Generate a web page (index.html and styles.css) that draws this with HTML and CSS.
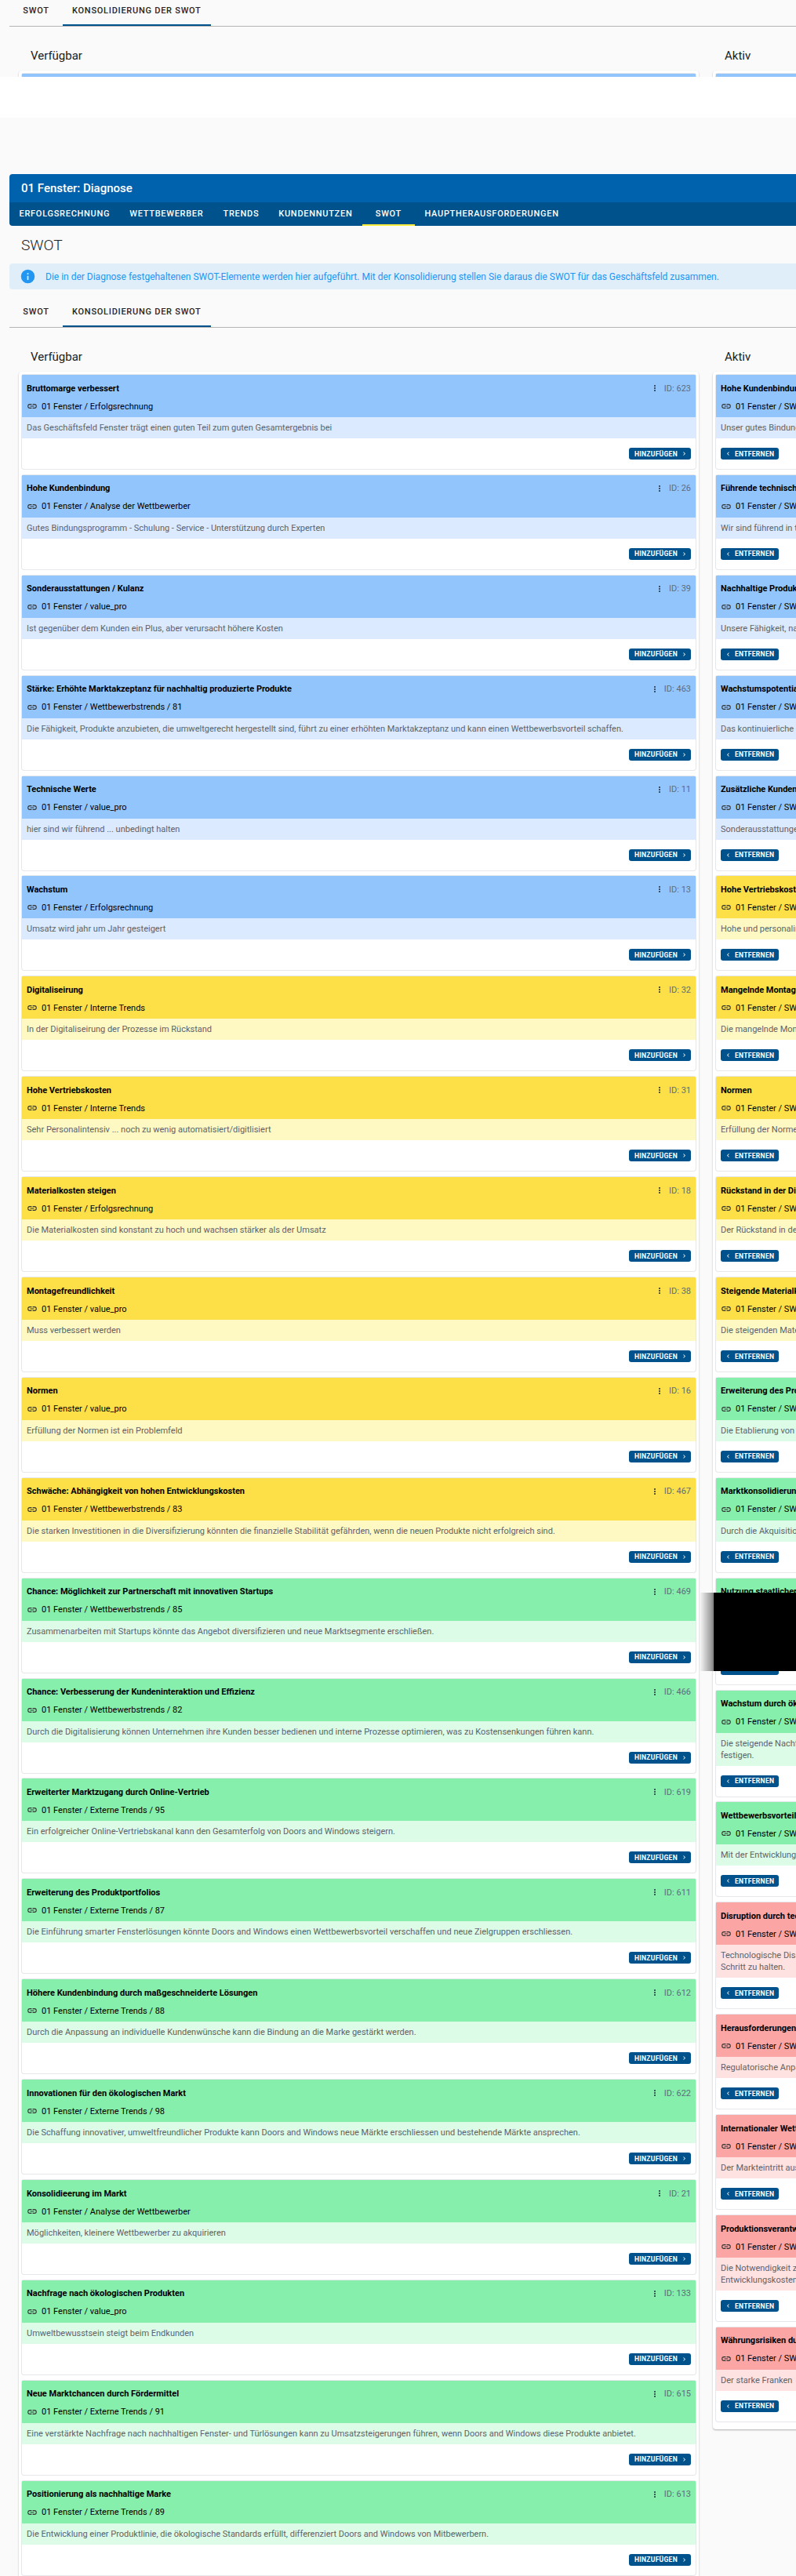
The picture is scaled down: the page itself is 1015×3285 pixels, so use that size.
FILE: index.html
```html
<!DOCTYPE html>
<html lang="de">
<head>
<meta charset="utf-8">
<title>01 Fenster: Diagnose</title>
<link rel="stylesheet" href="styles.css">
</head>
<body>
<svg class="defs" aria-hidden="true">
  <symbol id="i-link" viewBox="0 0 24 24"><path d="M3.9,12C3.9,10.29 5.29,8.9 7,8.9H11V7H7A5,5 0 0,0 2,12A5,5 0 0,0 7,17H11V15.1H7C5.29,15.1 3.9,13.71 3.9,12M8,13H16V11H8V13M17,7H13V8.9H17C18.71,8.9 20.1,10.29 20.1,12C20.1,13.71 18.71,15.1 17,15.1H13V17H17A5,5 0 0,0 22,12A5,5 0 0,0 17,7Z"/></symbol>
  <symbol id="i-dots" viewBox="0 0 24 24"><path d="M12,16A2,2 0 0,1 14,18A2,2 0 0,1 12,20A2,2 0 0,1 10,18A2,2 0 0,1 12,16M12,10A2,2 0 0,1 14,12A2,2 0 0,1 12,14A2,2 0 0,1 10,12A2,2 0 0,1 12,10M12,4A2,2 0 0,1 14,6A2,2 0 0,1 12,8A2,2 0 0,1 10,6A2,2 0 0,1 12,4Z"/></symbol>
  <symbol id="i-right" viewBox="0 0 24 24"><path d="M8.59,16.58L13.17,12L8.59,7.41L10,6L16,12L10,18L8.59,16.58Z"/></symbol>
  <symbol id="i-left" viewBox="0 0 24 24"><path d="M15.41,16.58L10.83,12L15.41,7.41L14,6L8,12L14,18L15.41,16.58Z"/></symbol>
  <symbol id="i-info" viewBox="0 0 24 24"><path d="M13,9H11V7H13M13,17H11V11H13M12,2A10,10 0 0,0 2,12A10,10 0 0,0 12,22A10,10 0 0,0 22,12A10,10 0 0,0 12,2Z"/></symbol>
</svg>
<div class="page">

  <section class="stub">
    <nav class="tabs">
      <a class="tab">SWOT</a>
      <a class="tab tab-active">KONSOLIDIERUNG DER SWOT</a>
    </nav>
    <div class="columns">
      <div class="column"><h3 class="col-title">Verfügbar</h3><div class="panel"><div class="card"><div class="card-head blue"></div></div></div></div>
      <div class="column"><h3 class="col-title">Aktiv</h3><div class="panel"><div class="card"><div class="card-head blue"></div></div></div></div>
    </div>
  </section>

  <div class="blank"></div>

  <main class="main">
    <header class="app-title">01 Fenster: Diagnose</header>
    <nav class="main-nav">
      <a class="nav-item">ERFOLGSRECHNUNG</a>
      <a class="nav-item">WETTBEWERBER</a>
      <a class="nav-item">TRENDS</a>
      <a class="nav-item">KUNDENNUTZEN</a>
      <a class="nav-item nav-active">SWOT</a>
      <a class="nav-item">HAUPTHERAUSFORDERUNGEN</a>
    </nav>
    <h2 class="page-title">SWOT</h2>
    <div class="alert">
      <svg class="alert-icon"><use href="#i-info"/></svg>
      <span>Die in der Diagnose festgehaltenen SWOT-Elemente werden hier aufgeführt. Mit der Konsolidierung stellen Sie daraus die SWOT für das Geschäftsfeld zusammen.</span>
    </div>
    <nav class="tabs tabs-main">
      <a class="tab">SWOT</a>
      <a class="tab tab-active">KONSOLIDIERUNG DER SWOT</a>
    </nav>

    <div class="columns">
      <div class="column">
        <h3 class="col-title">Verfügbar</h3>
        <div class="panel">

          <article class="card"><div class="card-head blue"><div class="head-row"><strong>Bruttomarge verbessert</strong><span class="meta"><svg class="dots"><use href="#i-dots"/></svg>ID: 623</span></div><div class="source"><svg class="link"><use href="#i-link"/></svg>01 Fenster / Erfolgsrechnung</div></div><p class="desc blue-l">Das Geschäftsfeld Fenster trägt einen guten Teil zum guten Gesamtergebnis bei</p><div class="actions end"><button class="btn btn-add">HINZUFÜGEN<svg class="chev"><use href="#i-right"/></svg></button></div></article>

          <article class="card"><div class="card-head blue"><div class="head-row"><strong>Hohe Kundenbindung</strong><span class="meta"><svg class="dots"><use href="#i-dots"/></svg>ID: 26</span></div><div class="source"><svg class="link"><use href="#i-link"/></svg>01 Fenster / Analyse der Wettbewerber</div></div><p class="desc blue-l">Gutes Bindungsprogramm - Schulung - Service - Unterstützung durch Experten</p><div class="actions end"><button class="btn btn-add">HINZUFÜGEN<svg class="chev"><use href="#i-right"/></svg></button></div></article>

          <article class="card"><div class="card-head blue"><div class="head-row"><strong>Sonderausstattungen / Kulanz</strong><span class="meta"><svg class="dots"><use href="#i-dots"/></svg>ID: 39</span></div><div class="source"><svg class="link"><use href="#i-link"/></svg>01 Fenster / value_pro</div></div><p class="desc blue-l">Ist gegenüber dem Kunden ein Plus, aber verursacht höhere Kosten</p><div class="actions end"><button class="btn btn-add">HINZUFÜGEN<svg class="chev"><use href="#i-right"/></svg></button></div></article>

          <article class="card"><div class="card-head blue"><div class="head-row"><strong>Stärke: Erhöhte Marktakzeptanz für nachhaltig produzierte Produkte</strong><span class="meta"><svg class="dots"><use href="#i-dots"/></svg>ID: 463</span></div><div class="source"><svg class="link"><use href="#i-link"/></svg>01 Fenster / Wettbewerbstrends / 81</div></div><p class="desc blue-l">Die Fähigkeit, Produkte anzubieten, die umweltgerecht hergestellt sind, führt zu einer erhöhten Marktakzeptanz und kann einen Wettbewerbsvorteil schaffen.</p><div class="actions end"><button class="btn btn-add">HINZUFÜGEN<svg class="chev"><use href="#i-right"/></svg></button></div></article>

          <article class="card"><div class="card-head blue"><div class="head-row"><strong>Technische Werte</strong><span class="meta"><svg class="dots"><use href="#i-dots"/></svg>ID: 11</span></div><div class="source"><svg class="link"><use href="#i-link"/></svg>01 Fenster / value_pro</div></div><p class="desc blue-l">hier sind wir führend ... unbedingt halten</p><div class="actions end"><button class="btn btn-add">HINZUFÜGEN<svg class="chev"><use href="#i-right"/></svg></button></div></article>

          <article class="card"><div class="card-head blue"><div class="head-row"><strong>Wachstum</strong><span class="meta"><svg class="dots"><use href="#i-dots"/></svg>ID: 13</span></div><div class="source"><svg class="link"><use href="#i-link"/></svg>01 Fenster / Erfolgsrechnung</div></div><p class="desc blue-l">Umsatz wird jahr um Jahr gesteigert</p><div class="actions end"><button class="btn btn-add">HINZUFÜGEN<svg class="chev"><use href="#i-right"/></svg></button></div></article>

          <article class="card"><div class="card-head yellow"><div class="head-row"><strong>Digitaliseirung</strong><span class="meta"><svg class="dots"><use href="#i-dots"/></svg>ID: 32</span></div><div class="source"><svg class="link"><use href="#i-link"/></svg>01 Fenster / Interne Trends</div></div><p class="desc yellow-l">In der Digitaliseirung der Prozesse im Rückstand</p><div class="actions end"><button class="btn btn-add">HINZUFÜGEN<svg class="chev"><use href="#i-right"/></svg></button></div></article>

          <article class="card"><div class="card-head yellow"><div class="head-row"><strong>Hohe Vertriebskosten</strong><span class="meta"><svg class="dots"><use href="#i-dots"/></svg>ID: 31</span></div><div class="source"><svg class="link"><use href="#i-link"/></svg>01 Fenster / Interne Trends</div></div><p class="desc yellow-l">Sehr Personalintensiv ... noch zu wenig automatisiert/digitlisiert</p><div class="actions end"><button class="btn btn-add">HINZUFÜGEN<svg class="chev"><use href="#i-right"/></svg></button></div></article>

          <article class="card"><div class="card-head yellow"><div class="head-row"><strong>Materialkosten steigen</strong><span class="meta"><svg class="dots"><use href="#i-dots"/></svg>ID: 18</span></div><div class="source"><svg class="link"><use href="#i-link"/></svg>01 Fenster / Erfolgsrechnung</div></div><p class="desc yellow-l">Die Materialkosten sind konstant zu hoch und wachsen stärker als der Umsatz</p><div class="actions end"><button class="btn btn-add">HINZUFÜGEN<svg class="chev"><use href="#i-right"/></svg></button></div></article>

          <article class="card"><div class="card-head yellow"><div class="head-row"><strong>Montagefreundlichkeit</strong><span class="meta"><svg class="dots"><use href="#i-dots"/></svg>ID: 38</span></div><div class="source"><svg class="link"><use href="#i-link"/></svg>01 Fenster / value_pro</div></div><p class="desc yellow-l">Muss verbessert werden</p><div class="actions end"><button class="btn btn-add">HINZUFÜGEN<svg class="chev"><use href="#i-right"/></svg></button></div></article>

          <article class="card"><div class="card-head yellow"><div class="head-row"><strong>Normen</strong><span class="meta"><svg class="dots"><use href="#i-dots"/></svg>ID: 16</span></div><div class="source"><svg class="link"><use href="#i-link"/></svg>01 Fenster / value_pro</div></div><p class="desc yellow-l">Erfüllung der Normen ist ein Problemfeld</p><div class="actions end"><button class="btn btn-add">HINZUFÜGEN<svg class="chev"><use href="#i-right"/></svg></button></div></article>

          <article class="card"><div class="card-head yellow"><div class="head-row"><strong>Schwäche: Abhängigkeit von hohen Entwicklungskosten</strong><span class="meta"><svg class="dots"><use href="#i-dots"/></svg>ID: 467</span></div><div class="source"><svg class="link"><use href="#i-link"/></svg>01 Fenster / Wettbewerbstrends / 83</div></div><p class="desc yellow-l">Die starken Investitionen in die Diversifizierung könnten die finanzielle Stabilität gefährden, wenn die neuen Produkte nicht erfolgreich sind.</p><div class="actions end"><button class="btn btn-add">HINZUFÜGEN<svg class="chev"><use href="#i-right"/></svg></button></div></article>

          <article class="card"><div class="card-head green"><div class="head-row"><strong>Chance: Möglichkeit zur Partnerschaft mit innovativen Startups</strong><span class="meta"><svg class="dots"><use href="#i-dots"/></svg>ID: 469</span></div><div class="source"><svg class="link"><use href="#i-link"/></svg>01 Fenster / Wettbewerbstrends / 85</div></div><p class="desc green-l">Zusammenarbeiten mit Startups könnte das Angebot diversifizieren und neue Marktsegmente erschließen.</p><div class="actions end"><button class="btn btn-add">HINZUFÜGEN<svg class="chev"><use href="#i-right"/></svg></button></div></article>

          <article class="card"><div class="card-head green"><div class="head-row"><strong>Chance: Verbesserung der Kundeninteraktion und Effizienz</strong><span class="meta"><svg class="dots"><use href="#i-dots"/></svg>ID: 466</span></div><div class="source"><svg class="link"><use href="#i-link"/></svg>01 Fenster / Wettbewerbstrends / 82</div></div><p class="desc green-l">Durch die Digitalisierung können Unternehmen ihre Kunden besser bedienen und interne Prozesse optimieren, was zu Kostensenkungen führen kann.</p><div class="actions end"><button class="btn btn-add">HINZUFÜGEN<svg class="chev"><use href="#i-right"/></svg></button></div></article>

          <article class="card"><div class="card-head green"><div class="head-row"><strong>Erweiterter Marktzugang durch Online-Vertrieb</strong><span class="meta"><svg class="dots"><use href="#i-dots"/></svg>ID: 619</span></div><div class="source"><svg class="link"><use href="#i-link"/></svg>01 Fenster / Externe Trends / 95</div></div><p class="desc green-l">Ein erfolgreicher Online-Vertriebskanal kann den Gesamterfolg von Doors and Windows steigern.</p><div class="actions end"><button class="btn btn-add">HINZUFÜGEN<svg class="chev"><use href="#i-right"/></svg></button></div></article>

          <article class="card"><div class="card-head green"><div class="head-row"><strong>Erweiterung des Produktportfolios</strong><span class="meta"><svg class="dots"><use href="#i-dots"/></svg>ID: 611</span></div><div class="source"><svg class="link"><use href="#i-link"/></svg>01 Fenster / Externe Trends / 87</div></div><p class="desc green-l">Die Einführung smarter Fensterlösungen könnte Doors and Windows einen Wettbewerbsvorteil verschaffen und neue Zielgruppen erschliessen.</p><div class="actions end"><button class="btn btn-add">HINZUFÜGEN<svg class="chev"><use href="#i-right"/></svg></button></div></article>

          <article class="card"><div class="card-head green"><div class="head-row"><strong>Höhere Kundenbindung durch maßgeschneiderte Lösungen</strong><span class="meta"><svg class="dots"><use href="#i-dots"/></svg>ID: 612</span></div><div class="source"><svg class="link"><use href="#i-link"/></svg>01 Fenster / Externe Trends / 88</div></div><p class="desc green-l">Durch die Anpassung an individuelle Kundenwünsche kann die Bindung an die Marke gestärkt werden.</p><div class="actions end"><button class="btn btn-add">HINZUFÜGEN<svg class="chev"><use href="#i-right"/></svg></button></div></article>

          <article class="card"><div class="card-head green"><div class="head-row"><strong>Innovationen für den ökologischen Markt</strong><span class="meta"><svg class="dots"><use href="#i-dots"/></svg>ID: 622</span></div><div class="source"><svg class="link"><use href="#i-link"/></svg>01 Fenster / Externe Trends / 98</div></div><p class="desc green-l">Die Schaffung innovativer, umweltfreundlicher Produkte kann Doors and Windows neue Märkte erschliessen und bestehende Märkte ansprechen.</p><div class="actions end"><button class="btn btn-add">HINZUFÜGEN<svg class="chev"><use href="#i-right"/></svg></button></div></article>

          <article class="card"><div class="card-head green"><div class="head-row"><strong>Konsolidieerung im Markt</strong><span class="meta"><svg class="dots"><use href="#i-dots"/></svg>ID: 21</span></div><div class="source"><svg class="link"><use href="#i-link"/></svg>01 Fenster / Analyse der Wettbewerber</div></div><p class="desc green-l">Möglichkeiten, kleinere Wettbewerber zu akquirieren</p><div class="actions end"><button class="btn btn-add">HINZUFÜGEN<svg class="chev"><use href="#i-right"/></svg></button></div></article>

          <article class="card"><div class="card-head green"><div class="head-row"><strong>Nachfrage nach ökologischen Produkten</strong><span class="meta"><svg class="dots"><use href="#i-dots"/></svg>ID: 133</span></div><div class="source"><svg class="link"><use href="#i-link"/></svg>01 Fenster / value_pro</div></div><p class="desc green-l">Umweltbewusstsein steigt beim Endkunden</p><div class="actions end"><button class="btn btn-add">HINZUFÜGEN<svg class="chev"><use href="#i-right"/></svg></button></div></article>

          <article class="card"><div class="card-head green"><div class="head-row"><strong>Neue Marktchancen durch Fördermittel</strong><span class="meta"><svg class="dots"><use href="#i-dots"/></svg>ID: 615</span></div><div class="source"><svg class="link"><use href="#i-link"/></svg>01 Fenster / Externe Trends / 91</div></div><p class="desc green-l">Eine verstärkte Nachfrage nach nachhaltigen Fenster- und Türlösungen kann zu Umsatzsteigerungen führen, wenn Doors and Windows diese Produkte anbietet.</p><div class="actions end"><button class="btn btn-add">HINZUFÜGEN<svg class="chev"><use href="#i-right"/></svg></button></div></article>

          <article class="card"><div class="card-head green"><div class="head-row"><strong>Positionierung als nachhaltige Marke</strong><span class="meta"><svg class="dots"><use href="#i-dots"/></svg>ID: 613</span></div><div class="source"><svg class="link"><use href="#i-link"/></svg>01 Fenster / Externe Trends / 89</div></div><p class="desc green-l">Die Entwicklung einer Produktlinie, die ökologische Standards erfüllt, differenziert Doors and Windows von Mitbewerbern.</p><div class="actions end"><button class="btn btn-add">HINZUFÜGEN<svg class="chev"><use href="#i-right"/></svg></button></div></article>

        </div>
      </div>

      <div class="column">
        <h3 class="col-title">Aktiv</h3>
        <div class="panel">

          <article class="card"><div class="card-head blue"><div class="head-row"><strong>Hohe Kundenbindung</strong></div><div class="source"><svg class="link"><use href="#i-link"/></svg>01 Fenster / SWOT</div></div><p class="desc blue-l">Unser gutes Bindungsprogramm</p><div class="actions"><button class="btn btn-remove"><svg class="chev"><use href="#i-left"/></svg>ENTFERNEN</button></div></article>

          <article class="card"><div class="card-head blue"><div class="head-row"><strong>Führende technische Werte</strong></div><div class="source"><svg class="link"><use href="#i-link"/></svg>01 Fenster / SWOT</div></div><p class="desc blue-l">Wir sind führend in technischen Werten</p><div class="actions"><button class="btn btn-remove"><svg class="chev"><use href="#i-left"/></svg>ENTFERNEN</button></div></article>

          <article class="card"><div class="card-head blue"><div class="head-row"><strong>Nachhaltige Produkte</strong></div><div class="source"><svg class="link"><use href="#i-link"/></svg>01 Fenster / SWOT</div></div><p class="desc blue-l">Unsere Fähigkeit, nachhaltig zu produzieren</p><div class="actions"><button class="btn btn-remove"><svg class="chev"><use href="#i-left"/></svg>ENTFERNEN</button></div></article>

          <article class="card"><div class="card-head blue"><div class="head-row"><strong>Wachstumspotential</strong></div><div class="source"><svg class="link"><use href="#i-link"/></svg>01 Fenster / SWOT</div></div><p class="desc blue-l">Das kontinuierliche Wachstum</p><div class="actions"><button class="btn btn-remove"><svg class="chev"><use href="#i-left"/></svg>ENTFERNEN</button></div></article>

          <article class="card"><div class="card-head blue"><div class="head-row"><strong>Zusätzliche Kundenleistungen</strong></div><div class="source"><svg class="link"><use href="#i-link"/></svg>01 Fenster / SWOT</div></div><p class="desc blue-l">Sonderausstattungen</p><div class="actions"><button class="btn btn-remove"><svg class="chev"><use href="#i-left"/></svg>ENTFERNEN</button></div></article>

          <article class="card"><div class="card-head yellow"><div class="head-row"><strong>Hohe Vertriebskosten</strong></div><div class="source"><svg class="link"><use href="#i-link"/></svg>01 Fenster / SWOT</div></div><p class="desc yellow-l">Hohe und personalintensive Kosten</p><div class="actions"><button class="btn btn-remove"><svg class="chev"><use href="#i-left"/></svg>ENTFERNEN</button></div></article>

          <article class="card"><div class="card-head yellow"><div class="head-row"><strong>Mangelnde Montagefreundlichkeit</strong></div><div class="source"><svg class="link"><use href="#i-link"/></svg>01 Fenster / SWOT</div></div><p class="desc yellow-l">Die mangelnde Montagefreundlichkeit</p><div class="actions"><button class="btn btn-remove"><svg class="chev"><use href="#i-left"/></svg>ENTFERNEN</button></div></article>

          <article class="card"><div class="card-head yellow"><div class="head-row"><strong>Normen</strong></div><div class="source"><svg class="link"><use href="#i-link"/></svg>01 Fenster / SWOT</div></div><p class="desc yellow-l">Erfüllung der Normen</p><div class="actions"><button class="btn btn-remove"><svg class="chev"><use href="#i-left"/></svg>ENTFERNEN</button></div></article>

          <article class="card"><div class="card-head yellow"><div class="head-row"><strong>Rückstand in der Digitalisierung</strong></div><div class="source"><svg class="link"><use href="#i-link"/></svg>01 Fenster / SWOT</div></div><p class="desc yellow-l">Der Rückstand in der Digitalisierung</p><div class="actions"><button class="btn btn-remove"><svg class="chev"><use href="#i-left"/></svg>ENTFERNEN</button></div></article>

          <article class="card"><div class="card-head yellow"><div class="head-row"><strong>Steigende Materialkosten</strong></div><div class="source"><svg class="link"><use href="#i-link"/></svg>01 Fenster / SWOT</div></div><p class="desc yellow-l">Die steigenden Materialkosten</p><div class="actions"><button class="btn btn-remove"><svg class="chev"><use href="#i-left"/></svg>ENTFERNEN</button></div></article>

          <article class="card"><div class="card-head green"><div class="head-row"><strong>Erweiterung des Produktportfolios</strong></div><div class="source"><svg class="link"><use href="#i-link"/></svg>01 Fenster / SWOT</div></div><p class="desc green-l">Die Etablierung von Produkten</p><div class="actions"><button class="btn btn-remove"><svg class="chev"><use href="#i-left"/></svg>ENTFERNEN</button></div></article>

          <article class="card"><div class="card-head green"><div class="head-row"><strong>Marktkonsolidierung</strong></div><div class="source"><svg class="link"><use href="#i-link"/></svg>01 Fenster / SWOT</div></div><p class="desc green-l">Durch die Akquisition</p><div class="actions"><button class="btn btn-remove"><svg class="chev"><use href="#i-left"/></svg>ENTFERNEN</button></div></article>

          <article class="card"><div class="card-head green"><div class="head-row"><strong>Nutzung staatlicher Förderungen</strong></div><div class="source"><svg class="link"><use href="#i-link"/></svg>01 Fenster / SWOT</div></div><p class="desc green-l">Die Nutzung staatlicher<br>Förderungen.</p><div class="actions"><button class="btn btn-remove"><svg class="chev"><use href="#i-left"/></svg>ENTFERNEN</button></div></article>

          <article class="card"><div class="card-head green"><div class="head-row"><strong>Wachstum durch ökologische Produkte</strong></div><div class="source"><svg class="link"><use href="#i-link"/></svg>01 Fenster / SWOT</div></div><p class="desc green-l">Die steigende Nachfrage<br>festigen.</p><div class="actions"><button class="btn btn-remove"><svg class="chev"><use href="#i-left"/></svg>ENTFERNEN</button></div></article>

          <article class="card"><div class="card-head green"><div class="head-row"><strong>Wettbewerbsvorteil</strong></div><div class="source"><svg class="link"><use href="#i-link"/></svg>01 Fenster / SWOT</div></div><p class="desc green-l">Mit der Entwicklung</p><div class="actions"><button class="btn btn-remove"><svg class="chev"><use href="#i-left"/></svg>ENTFERNEN</button></div></article>

          <article class="card"><div class="card-head red"><div class="head-row"><strong>Disruption durch technologie</strong></div><div class="source"><svg class="link"><use href="#i-link"/></svg>01 Fenster / SWOT</div></div><p class="desc red-l">Technologische Disruption<br>Schritt zu halten.</p><div class="actions"><button class="btn btn-remove"><svg class="chev"><use href="#i-left"/></svg>ENTFERNEN</button></div></article>

          <article class="card"><div class="card-head red"><div class="head-row"><strong>Herausforderungen</strong></div><div class="source"><svg class="link"><use href="#i-link"/></svg>01 Fenster / SWOT</div></div><p class="desc red-l">Regulatorische Anpassungen</p><div class="actions"><button class="btn btn-remove"><svg class="chev"><use href="#i-left"/></svg>ENTFERNEN</button></div></article>

          <article class="card"><div class="card-head red"><div class="head-row"><strong>Internationaler Wettbewerb</strong></div><div class="source"><svg class="link"><use href="#i-link"/></svg>01 Fenster / SWOT</div></div><p class="desc red-l">Der Markteintritt ausländischer</p><div class="actions"><button class="btn btn-remove"><svg class="chev"><use href="#i-left"/></svg>ENTFERNEN</button></div></article>

          <article class="card"><div class="card-head red"><div class="head-row"><strong>Produktionsverantwortung</strong></div><div class="source"><svg class="link"><use href="#i-link"/></svg>01 Fenster / SWOT</div></div><p class="desc red-l">Die Notwendigkeit zur<br>Entwicklungskosten</p><div class="actions"><button class="btn btn-remove"><svg class="chev"><use href="#i-left"/></svg>ENTFERNEN</button></div></article>

          <article class="card"><div class="card-head red"><div class="head-row"><strong>Währungsrisiken durch Franken</strong></div><div class="source"><svg class="link"><use href="#i-link"/></svg>01 Fenster / SWOT</div></div><p class="desc red-l">Der starke Franken</p><div class="actions"><button class="btn btn-remove"><svg class="chev"><use href="#i-left"/></svg>ENTFERNEN</button></div></article>

        </div>
      </div>
    </div>
  </main>

  <div class="redaction"></div>
</div>
</body>
</html>
```

FILE: styles.css
```css
* { box-sizing: border-box; }

html, body { margin: 0; padding: 0; }

body {
  background: #fafafa;
  color: #212121;
  font-family: Roboto, "Liberation Sans", sans-serif;
  font-size: 11px;
}

.defs { position: absolute; width: 0; height: 0; }

.page {
  position: relative;
  width: 1015px;
  height: 3285px;
  overflow: hidden;
  background: #fafafa;
}

/* top remnant */
.stub {
  height: 98px;
  padding-left: 12px;
  overflow: hidden;
  width: 1776px;
}
.stub .tabs { margin-top: -1px; }

.blank { height: 52px; background: #fff; }

.main {
  width: 1776px;
  padding: 72px 0 0 12px;
}

/* title bar + nav */
.app-title {
  height: 36px;
  padding-left: 15px;
  background: #0061ad;
  color: #fff;
  font-size: 15px;
  font-weight: 500;
  line-height: 36px;
  border-radius: 4px 0 0 0;
}

.main-nav {
  display: flex;
  height: 30px;
  background: #00528c;
  border-radius: 0 0 0 4px;
}

.nav-item {
  display: flex;
  align-items: center;
  justify-content: center;
  min-width: 67px;
  padding: 0 12.5px;
  color: #fff;
  font-size: 11px;
  font-weight: 500;
  letter-spacing: 0.72px;
  border-bottom: 2px solid transparent;
}

.nav-active { border-bottom-color: #ffeb3b; }

.page-title {
  height: 48px;
  margin: 0;
  padding-left: 15px;
  font-size: 19.2px;
  font-weight: 300;
  line-height: 50px;
}

.alert {
  display: flex;
  align-items: center;
  height: 33px;
  padding-left: 13px;
  background: #e0eef9;
  color: #2196f3;
  font-size: 12px;
  border-radius: 4px;
}

.alert-icon {
  width: 21px;
  height: 21px;
  margin-right: 12px;
  fill: #2196f3;
  flex: none;
}

/* secondary tabs */
.tabs {
  display: flex;
  height: 35px;
  border-bottom: 1px solid #b4b4b4;
}

.tabs-main { margin-top: 14px; }

.tab {
  display: flex;
  align-items: center;
  justify-content: center;
  min-width: 68px;
  padding: 0 12px 3px;
  color: #262626;
  font-size: 11px;
  font-weight: 500;
  letter-spacing: 0.74px;
  border-bottom: 2px solid transparent;
}

.tab-active { border-bottom-color: #00528c; }

/* columns */
.columns {
  display: flex;
  align-items: flex-start;
  gap: 18px;
  padding-left: 12px;
}

.column { width: 867px; flex: none; }

.col-title {
  height: 56px;
  margin: 0;
  padding: 27px 0 0 15px;
  font-size: 15px;
  font-weight: 400;
  line-height: 20px;
}

.panel {
  padding: 4px 4px 2px;
  background: #fff;
  border-radius: 4px;
  box-shadow: 0 1px 2px rgba(0, 0, 0, 0.3);
}

.card {
  margin-bottom: 7.9px;
  background: #fff;
  border-radius: 3px;
  box-shadow: 0 0 0 1px #e5e7eb;
}

.card-head {
  display: block;
  height: 54px;
  padding: 8px 6px 0;
  color: #000;
}

.head-row {
  display: flex;
  justify-content: space-between;
  align-items: center;
  height: 18px;
}

.head-row strong { font-size: 11px; font-weight: 700; }

.meta {
  display: flex;
  align-items: center;
  color: #5f6b7a;
  font-size: 11px;
}

.dots {
  width: 12px;
  height: 12px;
  margin-right: 6px;
  fill: #1f2937;
}

.source {
  display: flex;
  align-items: center;
  height: 18px;
  margin-top: 5px;
  font-size: 11px;
}

.link {
  width: 14px;
  height: 14px;
  margin-right: 5px;
  fill: #333;
  flex: none;
}

.desc {
  margin: 0;
  padding: 6px;
  color: #5f6368;
  font-size: 11px;
  line-height: 15px;
  white-space: nowrap;
}

.actions {
  display: flex;
  height: 39px;
  padding: 12px 6px;
}

.actions.end { justify-content: flex-end; }

.btn {
  display: flex;
  align-items: center;
  gap: 4px;
  height: 15px;
  margin: 0;
  border: 0;
  border-radius: 3px;
  background: #00528c;
  color: #fff;
  font-family: inherit;
  font-size: 8.5px;
  font-weight: 700;
  letter-spacing: 0.3px;
}

.btn-add { padding: 0 4px 0 7px; }
.btn-remove { padding: 0 6px 0 5px; }

.chev { width: 9px; height: 9px; fill: #fff; }

/* colours */
.blue { background: #93c5fd; }
.blue-l { background: #dbeafe; }
.yellow { background: #fde047; }
.yellow-l { background: #fef9c3; }
.green { background: #86efac; }
.green-l { background: #dcfce7; }
.red { background: #fca5a5; }
.red-l { background: #fee2e2; }

/* blacked-out region lying over the page */
.redaction {
  position: absolute;
  left: 910px;
  top: 2031px;
  width: 105px;
  height: 100px;
  background: #000;
}

.redaction::before {
  content: "";
  position: absolute;
  left: -18px;
  top: 0;
  width: 18px;
  height: 100%;
  background: linear-gradient(to right, rgba(0, 0, 0, 0), rgba(0, 0, 0, 0.45));
}
```
